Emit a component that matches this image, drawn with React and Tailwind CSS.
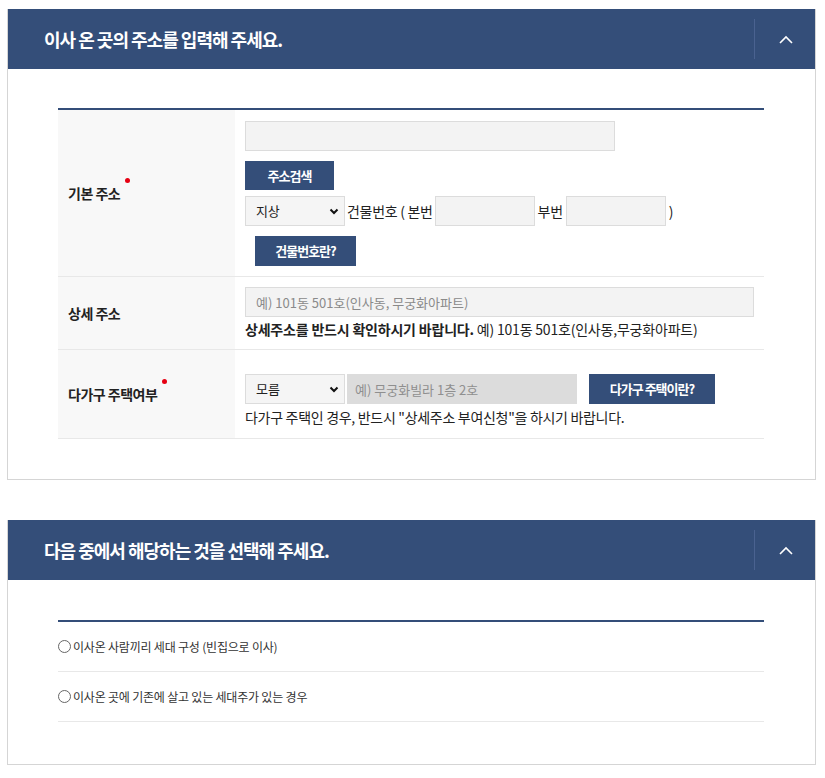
import React from "react"

const font = { fontFamily: '"Noto Sans CJK KR", "Noto Sans", sans-serif' }

function Chevron() {
  return (
    <svg width="14" height="9" viewBox="0 0 14 9" fill="none">
      <polyline points="1,8 7,2 13,8" stroke="white" strokeWidth="1.6" />
    </svg>
  )
}

function PanelHeader({ title }) {
  return (
    <div className="flex h-[60px] items-center bg-[#344e79]">
      <h2 className="grow pl-[36px] text-[18px] font-bold tracking-[-1px] text-white">{title}</h2>
      <div className="flex h-[40px] w-[61px] items-center justify-center border-l border-[#4a6290] pl-[2px]">
        <Chevron />
      </div>
    </div>
  )
}

function Label({ children, required }) {
  return (
    <div className="flex w-[177px] shrink-0 items-center bg-[#f8f8f8] pl-[10px]">
      <span className="relative text-[14px] font-bold tracking-[-0.5px] text-[#222]">
        {children}
        {required && <span className="absolute -right-[10px] -top-[5px] h-[5px] w-[5px] rounded-full bg-[#e60012]"></span>}
      </span>
    </div>
  )
}

function Select({ value, className }) {
  return (
    <div className={"relative h-[30px] w-[100px] " + className}>
      <select className="h-full w-full appearance-none border border-[#dcdcdc] bg-[#f5f5f5] pl-[10px] text-[13px] text-[#222]" defaultValue={value}>
        <option>{value}</option>
      </select>
      <svg className="pointer-events-none absolute right-[6px] top-[12px]" width="10" height="7" viewBox="0 0 10 7" fill="none">
        <polyline points="1.5,1.5 5,5 8.5,1.5" stroke="#111" strokeWidth="2" />
      </svg>
    </div>
  )
}

function Button({ children, className }) {
  return (
    <button className={"bg-[#344e79] text-[13px] font-bold tracking-[-1px] text-white " + className}>{children}</button>
  )
}

function Radio({ children }) {
  return (
    <label className="flex h-[50px] items-center gap-[2px] border-b border-[#e8e8e8] text-[12px] tracking-[-0.2px] text-[#333]">
      <span className="h-[13px] w-[13px] rounded-full border border-[#666] bg-white"></span>
      {children}
    </label>
  )
}

export default function App() {
  return (
    <div style={font} className="min-h-[778px] bg-white pl-[7px] pr-[9px] pt-[9px] pb-[13px]">
      <section className="border-x border-b border-[#d5d5d5]">
        <PanelHeader title="이사 온 곳의 주소를 입력해 주세요." />
        <div className="pl-[50px] pr-[51px] pt-[39px] pb-[40px]">
          <div className="border-t-2 border-[#344e79]">
            <div className="flex border-b border-[#e8e8e8]">
              <Label required>기본 주소</Label>
              <div className="flex flex-col items-start pl-[10px] pt-[11px] pb-[10px]">
                <input className="h-[30px] w-[370px] border border-[#dcdcdc] bg-[#f3f3f3]" />
                <Button className="mt-[10px] h-[29px] w-[89px]">주소검색</Button>
                <div className="mt-[6px] flex items-center text-[14px] tracking-[-0.3px] text-[#222]">
                  <Select value="지상" />
                  <span className="ml-[2px] mr-[2px]">건물번호 ( 본번</span>
                  <input className="h-[30px] w-[100px] border border-[#dcdcdc] bg-[#f3f3f3]" />
                  <span className="mx-[3px]">부번</span>
                  <input className="h-[30px] w-[100px] border border-[#dcdcdc] bg-[#f3f3f3]" />
                  <span className="ml-[3px]">)</span>
                </div>
                <Button className="ml-[10px] mt-[10px] h-[30px] w-[101px]">건물번호란?</Button>
              </div>
            </div>
            <div className="flex border-b border-[#e8e8e8]">
              <Label>상세 주소</Label>
              <div className="flex grow flex-col pl-[10px] pr-[10px] pt-[10px] pb-[9px]">
                <input
                  className="h-[30px] w-full border border-[#dcdcdc] bg-[#f3f3f3] px-[10px] text-[13px] placeholder:text-[#8a8a8a]"
                  placeholder="예) 101동 501호(인사동, 무궁화아파트)"
                />
                <p className="mt-[2px] text-[14px] tracking-[-0.2px] text-[#222]">
                  <b>상세주소를 반드시 확인하시기 바랍니다.</b> 예) 101동 501호(인사동,무궁화아파트)
                </p>
              </div>
            </div>
            <div className="flex border-b border-[#e8e8e8]">
              <Label required>다가구 주택여부</Label>
              <div className="flex flex-col pl-[10px] pt-[24px] pb-[10px]">
                <div className="flex items-center">
                  <Select value="모름" />
                  <input
                    disabled
                    className="ml-[2px] h-[30px] w-[230px] bg-[#dcdcdc] px-[8px] text-[13px] placeholder:text-[#8f8f8f]"
                    placeholder="예) 무궁화빌라 1층 2호"
                  />
                  <Button className="ml-[12px] h-[30px] w-[126px]">다가구 주택이란?</Button>
                </div>
                <p className="mt-[3px] text-[14px] tracking-[-0.3px] text-[#222]">
                  다가구 주택인 경우, 반드시 "상세주소 부여신청"을 하시기 바랍니다.
                </p>
              </div>
            </div>
          </div>
        </div>
      </section>

      <section className="mt-[40px] border-x border-b border-[#d5d5d5]">
        <PanelHeader title="다음 중에서 해당하는 것을 선택해 주세요." />
        <div className="pl-[50px] pr-[51px] pt-[40px] pb-[42px]">
          <div className="border-t-2 border-[#344e79]">
            <Radio>이사온 사람끼리 세대 구성 (빈집으로 이사)</Radio>
            <Radio>이사온 곳에 기존에 살고 있는 세대주가 있는 경우</Radio>
          </div>
        </div>
      </section>
    </div>
  )
}
